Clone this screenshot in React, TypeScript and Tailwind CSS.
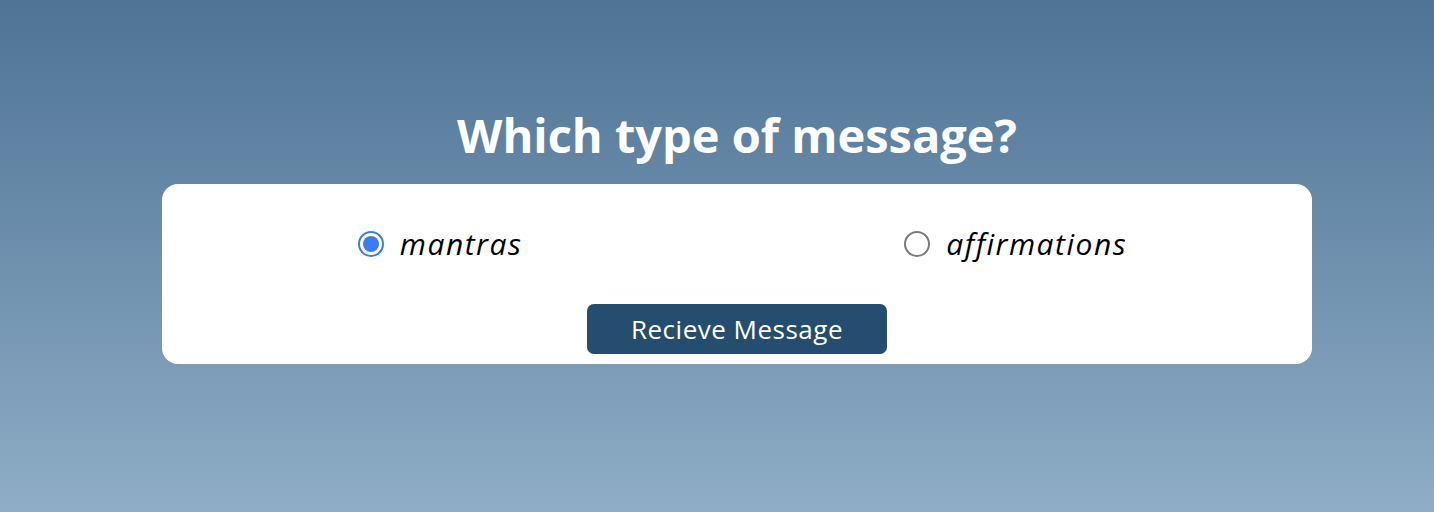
const OPTIONS = [
  { label: "mantras", checked: true },
  { label: "affirmations", checked: false },
];

const Radio = ({ checked }: { checked: boolean }) =>
  checked ? (
    <span className="flex h-[26px] w-[26px] items-center justify-center rounded-full border-2 border-[#3a7cf6] bg-white">
      <span className="h-[16px] w-[16px] rounded-full bg-[#3a7cf6]" />
    </span>
  ) : (
    <span className="h-[26px] w-[26px] rounded-full border-2 border-[#7a7a7a] bg-white" />
  );

const App = () => {
  return (
    <div className="flex h-[512px] w-full flex-col items-center bg-gradient-to-b from-[#4e7395] to-[#8fadc6] pl-[40px] font-['Open_Sans',sans-serif]">
      <h1 className="mt-[106px] text-[47px] leading-[58px] font-bold text-white">
        Which type of message?
      </h1>
      <div className="mt-[20px] flex h-[180px] w-[1150px] flex-col items-center rounded-[16px] bg-white">
        <div className="mt-[40px] flex w-full justify-center gap-[382px] pl-[11px]">
          {OPTIONS.map((opt) => (
            <label key={opt.label} className="flex items-center gap-[16px]">
              <Radio checked={opt.checked} />
              <span className="text-[30px] leading-[40px] tracking-[1.5px] text-black italic">
                {opt.label}
              </span>
            </label>
          ))}
        </div>
        <button className="mt-[40px] h-[50px] w-[300px] rounded-[7px] bg-[#254d70] text-[26px] tracking-[0.5px] text-white">
          Recieve Message
        </button>
      </div>
    </div>
  );
};

export default App;
